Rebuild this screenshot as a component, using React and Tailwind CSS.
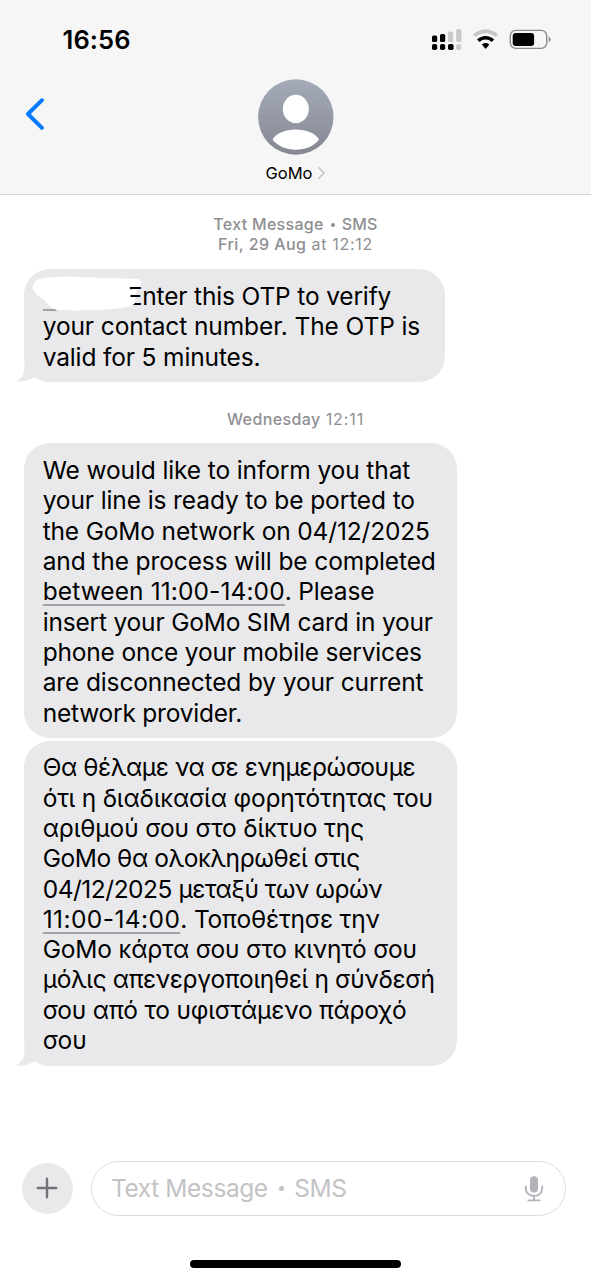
function StatusBar() {
  return (
    <div className="flex h-[74px] items-start justify-between pl-[62.5px] pr-[39px]">
      <div className="mt-[24px] text-[25.5px] leading-[32px] font-semibold tracking-[0.1px]">16:56</div>
      <div className="mt-[28px] flex items-start">
        <svg className="block" width="32" height="24" viewBox="0 0 32 24">
          <g fill="#000">
            <rect x="1" y="7.4" width="5.2" height="6.6" rx="1.6" />
            <rect x="9" y="6" width="5.2" height="8" rx="1.6" />
            <rect x="1" y="16" width="5.2" height="6" rx="1.8" />
            <rect x="9" y="16" width="5.2" height="6" rx="1.8" />
            <rect x="17" y="16" width="5.6" height="6" rx="1.8" />
          </g>
          <g fill="#c9c9c9">
            <rect x="17" y="3.6" width="5.2" height="10.4" rx="1.6" />
            <rect x="25.2" y="1" width="5.2" height="13" rx="1.6" />
            <rect x="25.2" y="16.2" width="5" height="5.8" rx="1.8" />
          </g>
        </svg>
        <svg className="ml-[9px] block" width="28" height="24" viewBox="0 0 28 24">
          <g fill="none">
            <path d="M2.3 7.8 A16.6 16.6 0 0 1 24.9 7.8" stroke="#c6c6c6" strokeWidth="3.6" />
            <path d="M6.3 12.8 A10.4 10.4 0 0 1 20.9 12.8" stroke="#000" strokeWidth="3.6" />
          </g>
          <path d="M9.9 16.5 Q13.6 13.6 17.3 16.5 L14.3 20.2 Q13.6 21 12.9 20.2 Z" fill="#000" />
        </svg>
        <svg className="ml-[9px] block" width="43" height="24" viewBox="0 0 43 24">
          <rect x="1.3" y="2.4" width="36.4" height="18" rx="5.4" fill="none" stroke="#8c8c8c" strokeWidth="1.4" />
          <rect x="3.7" y="4.9" width="21.4" height="13" rx="3" fill="#000" />
          <path d="M39.7 8.5 Q41.7 9.6 41.7 11.4 Q41.7 13.2 39.7 14.3 Z" fill="#8c8c8c" />
        </svg>
      </div>
    </div>
  );
}

function Header() {
  return (
    <header className="h-[195px] shrink-0 border-b border-[#d4d4d6] bg-[#f6f6f6]">
      <StatusBar />
      <div className="grid grid-cols-[1fr_76px_1fr]">
        <svg className="mt-[22px] ml-[24px] block" width="24" height="36" viewBox="0 0 24 36">
          <path d="M18 4.2 L3.9 18 L18 31.8" fill="none" stroke="#007aff" strokeWidth="3.9" strokeLinecap="round" strokeLinejoin="round" />
        </svg>
        <svg className="mt-[5px] block" width="76" height="76" viewBox="0.5 0 76 76">
          <defs>
            <linearGradient id="avatar" x1="0" y1="0" x2="0" y2="1">
              <stop offset="0" stopColor="#a5abb9" />
              <stop offset="1" stopColor="#858892" />
            </linearGradient>
          </defs>
          <circle cx="38.3" cy="38" r="37.7" fill="url(#avatar)" />
          <ellipse cx="38.3" cy="30" rx="13" ry="14.2" fill="#fff" />
          <path d="M15 60.6 C18.8 54 27.8 50.4 38.3 50.4 C48.8 50.4 57.8 54 61.5 60.6 C56.3 67.4 47.8 70.8 38.3 70.8 C28.8 70.8 20.3 67.4 15 60.6 Z" fill="#fff" />
        </svg>
      </div>
      <div className="mt-[7.5px] flex items-center justify-center gap-[4px]">
        <span className="text-[16.5px] leading-[20px]">GoMo</span>
        <svg className="block" width="9" height="14" viewBox="0 0 9 14">
          <path d="M1.8 1.8 L7 7 L1.8 12.2" fill="none" stroke="#c2c2c5" strokeWidth="1.5" strokeLinecap="round" strokeLinejoin="round" />
        </svg>
      </div>
    </header>
  );
}

function Tail() {
  return (
    <svg className="absolute -bottom-px -left-[8.5px] block" width="34" height="28" viewBox="0 0 34 28">
      <path d="M0 26.4 C9 27 15 24.6 19.2 21.4 C22 23.4 28 27 34 27 L34 26.9 L34 0 L8.5 0 L8.5 11 C8.5 18 6 23 0 26.4 Z" fill="#e9e9eb" />
    </svg>
  );
}

function Bubble({ className, tail, children }) {
  return (
    <div className={"relative ml-[24.3px] rounded-[26px] bg-[#e9e9eb] pt-[11.8px] pb-[10.4px] pl-[18.4px] text-[24.5px] leading-[30.3px] whitespace-nowrap " + className}>
      {tail && <Tail />}
      <div className="relative">{children}</div>
    </div>
  );
}

function Detected({ className, children }) {
  return (
    <span className={"underline decoration-[#a3a3a7] decoration-[1.5px] underline-offset-[3.5px] " + className}>{children}</span>
  );
}

function Composer() {
  return (
    <div className="mt-auto flex items-center pr-[25px] pl-[21.5px]">
      <div className="flex size-[51.5px] items-center justify-center rounded-full bg-[#e9e9eb]">
        <svg className="block" width="22" height="22" viewBox="0 0 22 22">
          <path d="M11 1.8 V20.2 M1.8 11 H20.2" stroke="#737377" strokeWidth="2.4" strokeLinecap="round" />
        </svg>
      </div>
      <div className="ml-[18px] flex h-[55.5px] flex-1 items-center rounded-full border-[1.5px] border-[#dcdcde] pr-[21px] pl-[19px] text-[24.5px] text-[#c3c3c5]">
        <span className="tracking-[-0.42px]">Text Message</span>
        <span className="mr-[10px] ml-[11px] size-[5.5px] rounded-full bg-[#c3c3c5]" />
        <span className="tracking-[-0.4px]">SMS</span>
        <svg className="mt-px ml-auto block" width="20" height="28" viewBox="0 0 20 28">
          <rect x="6" y="1.2" width="8" height="16.4" rx="4" fill="#b3b4ba" />
          <path d="M1.8 11.5 V13 C1.8 18 5 21 10 21 C15 21 18.2 18 18.2 13 V11.5 M10 21 V25.2 M4.4 25.4 H15.6" fill="none" stroke="#b3b4ba" strokeWidth="1.9" strokeLinecap="round" />
        </svg>
      </div>
    </div>
  );
}

export default function App() {
  return (
    <div className="flex h-[1280px] w-[591px] flex-col overflow-hidden bg-white font-['Inter',sans-serif] text-black">
      <Header />
      <div className="mt-[20.4px] flex flex-col items-center text-[16px] leading-[19.7px] font-medium text-[#8e8e92]">
        <div className="flex items-center">
          <span className="tracking-[0.3px]">Text Message</span>
          <span className="mx-[7px] size-[4px] rounded-full bg-[#8e8e92]" />
          <span className="tracking-[0.2px]">SMS</span>
        </div>
        <div className="flex gap-[5px]">
          <span className="tracking-[0.45px]">Fri, 29 Aug</span>
          <span className="font-normal tracking-[0.7px]">at 12:12</span>
        </div>
      </div>
      <Bubble className="mt-[14.4px] w-[421px]" tail>
        <div className="relative flex">
          <Detected className="mr-[71px] w-[14px] overflow-hidden">&nbsp;&nbsp;</Detected>
          <span className="tracking-[-0.16px]">Enter this OTP to verify</span>
          <svg className="absolute -top-[6px] -left-[12px] block" width="114" height="38" viewBox="0 0 114 38">
            <path d="M3 8 C5 3.5 12 4 15 2.6 C32 1 50 2 70 3 C85 3.4 98 3.6 107 4 C111 5 110.5 9 109 12 L98.2 12 L98.2 14.2 L106 14.2 L105 19.8 L99.5 20 L99.5 22 L104.5 22 L103.5 29 C98 32 93 32.6 86 33.6 C70 35.6 40 36 26 34.8 C20 33.6 15 28 13.5 24.8 C8 22.4 2 17 1.6 13 C1.4 11 2 9.4 3 8 Z" fill="#fff" />
          </svg>
        </div>
        <div className="tracking-[-0.1px]">your contact number. The OTP is</div>
        <div className="tracking-[-0.14px]">valid for 5 minutes.</div>
      </Bubble>
      <div className="mt-[27px] flex justify-center gap-[5px] text-[16px] leading-[20px] font-medium text-[#8e8e92]">
        <span className="tracking-[0.4px]">Wednesday</span>
        <span className="font-normal tracking-[0.9px]">12:11</span>
      </div>
      <Bubble className="mt-[14.1px] w-[432.7px]">
        <div className="tracking-[-0.11px]">We would like to inform you that</div>
        <div className="tracking-[-0.11px]">your line is ready to be ported to</div>
        <div className="tracking-[-0.16px]">the GoMo network on 04/12/2025</div>
        <div className="tracking-[-0.11px]">and the process will be completed</div>
        <div className="tracking-[-0.18px]"><Detected className="tracking-[0.1px]">between 11:00-14:00</Detected>. Please</div>
        <div className="tracking-[-0.19px]">insert your GoMo SIM card in your</div>
        <div className="tracking-[-0.18px]">phone once your mobile services</div>
        <div className="tracking-[-0.13px]">are disconnected by your current</div>
        <div className="tracking-[-0.22px]">network provider.</div>
      </Bubble>
      <Bubble className="mt-[2.3px] w-[432.7px]" tail>
        <div className="tracking-[-0.44px]">Θα θέλαμε να σε ενημερώσουμε</div>
        <div className="tracking-[-0.18px]">ότι η διαδικασία φορητότητας του</div>
        <div className="tracking-[-0.14px]">αριθμού σου στο δίκτυο της</div>
        <div className="tracking-[-0.45px]">GoMo θα ολοκληρωθεί στις</div>
        <div className="tracking-[-0.48px]">04/12/2025 μεταξύ των ωρών</div>
        <div className="tracking-[-0.2px]"><Detected className="tracking-[0.43px]">11:00-14:00</Detected>. Τοποθέτησε την</div>
        <div className="tracking-[-0.18px]">GoMo κάρτα σου στο κινητό σου</div>
        <div className="tracking-[-0.37px]">μόλις απενεργοποιηθεί η σύνδεσή</div>
        <div className="tracking-[-0.2px]">σου από το υφιστάμενο πάροχό</div>
        <div>σου</div>
      </Bubble>
      <Composer />
      <div className="mt-[44px] mb-[12px] h-[8px] w-[210.5px] shrink-0 self-center rounded-full bg-black" />
    </div>
  );
}
